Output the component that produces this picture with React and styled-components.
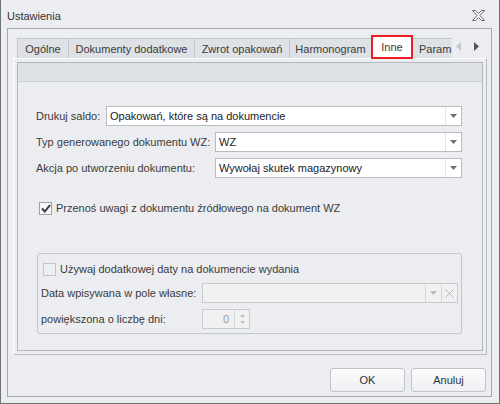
import styled, { createGlobalStyle } from 'styled-components';

const Global = createGlobalStyle`
  body { margin: 0; background: #ebedf0; }
  * { box-sizing: border-box; }
`;

const Window = styled.div`
  width: 500px;
  height: 404px;
  display: flex;
  flex-direction: column;
  background: #ebedf0;
  border: 1px solid #6f7378;
  border-top: none;
  font-family: 'Liberation Sans', Arial, sans-serif;
  font-size: 11px;
  color: #3b3b3b;
`;

const TitleBar = styled.div`
  height: 28px;
  flex: none;
  display: flex;
  align-items: center;
  justify-content: space-between;
  padding: 3px 14px 0 6px;
  font-size: 11px;
  color: #333;
`;

const Frame = styled.div`
  flex: 1;
  margin: 0 7px 6px 6px;
  border: 1px solid #a5a9ae;
  display: flex;
  flex-direction: column;
  padding: 9px 4px 4px 5px;
`;

const TabRow = styled.div`
  height: 20px;
  flex: none;
  display: flex;
  align-items: flex-end;
  position: relative;
  z-index: 2;
`;

const TabClip = styled.div`
  width: 439px;
  height: 24px;
  margin-top: -4px;
  padding-left: 4px;
  display: flex;
  align-items: flex-end;
  overflow: hidden;
  align-self: flex-end;
  margin-bottom: -1px;
  padding-bottom: 1px;
`;

const Tab = styled.div`
  flex: none;
  width: ${(p) => p.$w}px;
  height: 20px;
  margin-left: -1px;
  display: flex;
  align-items: center;
  justify-content: center;
  white-space: nowrap;
  overflow: hidden;
  background: #dee1e6;
  border: 1px solid #c3c7cc;
  border-bottom: none;
  color: #3b3b3b;

  &:first-child {
    margin-left: 0;
  }

  &.active {
    height: 24px;
    margin-bottom: -1px;
    background: #fff;
    border: 2px solid #ee1c25;
    position: relative;
    z-index: 3;
  }

  &.clipped {
    justify-content: flex-start;
    padding-left: 6px;
  }
`;

const Arrows = styled.div`
  display: flex;
  align-items: center;
  gap: 13px;
  padding: 0 0 4px 4px;
  align-self: center;
`;

const Panel = styled.div`
  height: 297px;
  flex: none;
  border: 1px solid #b9bdc2;
  border-top-color: #fff;
  border-left-color: #fff;
  padding: 3px;
  display: flex;
`;

const PanelInner = styled.div`
  flex: 1;
  border: 1px solid #b3b7bc;
  background: #ebedf0;
  display: flex;
  flex-direction: column;
`;

const Strip = styled.div`
  height: 19px;
  flex: none;
  background: #dee1e5;
  border-bottom: 1px solid #d0d3d7;
`;

const Content = styled.div`
  padding: 24px 20px 0 18px;
  display: flex;
  flex-direction: column;
`;

const Row = styled.div`
  display: flex;
  align-items: center;
  height: 20px;
  margin-top: ${(p) => p.$mt || 0}px;
`;

const Label = styled.div`
  flex: none;
  width: ${(p) => p.$w}px;
  white-space: nowrap;
`;

const Combo = styled.div`
  flex: ${(p) => (p.$w ? 'none' : '1')};
  width: ${(p) => (p.$w ? `${p.$w}px` : 'auto')};
  height: 20px;
  display: flex;
  align-items: stretch;
  background: ${(p) => (p.$disabled ? '#f1f1f2' : '#fff')};
  border: 1px solid ${(p) => (p.$disabled ? '#c6c9cd' : '#b7bbc0')};
`;

const ComboText = styled.div`
  flex: 1;
  display: flex;
  align-items: center;
  justify-content: ${(p) => (p.$right ? 'flex-end' : 'flex-start')};
  padding: 0 ${(p) => (p.$right ? '5px' : '3px')};
  color: ${(p) => (p.$disabled ? '#9a9a9a' : '#222')};
  white-space: nowrap;
`;

const ComboButton = styled.div`
  flex: none;
  width: ${(p) => p.$w || 16}px;
  display: flex;
  flex-direction: ${(p) => (p.$col ? 'column' : 'row')};
  align-items: center;
  justify-content: center;
  gap: 4px;
  border-left: 1px solid ${(p) => (p.$disabled ? '#d6d8db' : '#e2e4e7')};
`;

const Check = styled.div`
  width: 13px;
  height: 13px;
  flex: none;
  border: 1px solid ${(p) => (p.$disabled ? '#c2c5c9' : '#9ea2a6')};
  background: ${(p) => (p.$disabled ? '#eceef0' : '#f5f6f7')};
  display: flex;
  align-items: center;
  justify-content: center;
  margin: 0 4px 0 ${(p) => p.$ml || 0}px;
`;

const CheckRow = styled.div`
  display: flex;
  align-items: center;
  height: 14px;
  margin-top: ${(p) => p.$mt || 0}px;
  white-space: nowrap;
`;

const Group = styled.fieldset`
  margin: 38px 0 0 1px;
  height: 81px;
  border: 1px solid #c2c6cb;
  border-radius: 3px;
  padding: 8px 3px 4px 3px;
  display: flex;
  flex-direction: column;
  min-width: 0;
`;

const Footer = styled.div`
  margin-top: 13px;
  display: flex;
  justify-content: flex-end;
  gap: 6px;
  padding-right: 1px;
`;

const Button = styled.button`
  width: 75px;
  height: 24px;
  font-family: inherit;
  font-size: 11px;
  color: #333;
  background: linear-gradient(#fbfbfc, #eef0f2);
  border: 1px solid #c1c5ca;
  border-radius: 3px;
  padding: 0;
`;

const DownArrow = ({ color = '#707070' }) => (
  <svg width="7" height="4" viewBox="0 0 7 4">
    <path d="M0 0H7L3.5 4Z" fill={color} />
  </svg>
);

const Close = () => (
  <svg width="13" height="11" viewBox="0 0 13 11">
    <path
      d="M0.5 0.5H3.5L6.5 3.5L9.5 0.5H12.5L8 5.5L12.5 10.5H9.5L6.5 7.5L3.5 10.5H0.5L5 5.5Z"
      fill="#f4f4f4"
      stroke="#6a6a6a"
      strokeWidth="1"
    />
  </svg>
);

const CheckMark = () => (
  <svg width="10" height="9" viewBox="0 0 10 9">
    <path d="M1 4.5L3.8 7.5L9 1" fill="none" stroke="#3a3a3a" strokeWidth="2" />
  </svg>
);

const tabs = [
  { name: 'Ogólne', w: 52 },
  { name: 'Dokumenty dodatkowe', w: 127 },
  { name: 'Zwrot opakowań', w: 96 },
  { name: 'Harmonogram', w: 83 },
  { name: 'Inne', w: 42, active: true },
  { name: 'Parametry', w: 80, clipped: true },
];

export default function App() {
  return (
    <>
      <Global />
      <Window>
        <TitleBar>
          <span>Ustawienia</span>
          <Close />
        </TitleBar>
        <Frame>
          <TabRow>
            <TabClip>
              {tabs.map((t) => (
                <Tab
                  key={t.name}
                  $w={t.w}
                  className={[t.active && 'active', t.clipped && 'clipped'].filter(Boolean).join(' ')}
                >
                  {t.name}
                </Tab>
              ))}
            </TabClip>
            <Arrows>
              <svg width="5" height="9" viewBox="0 0 5 9">
                <path d="M5 0V9L0 4.5Z" fill="#c4c7cb" />
              </svg>
              <svg width="5" height="9" viewBox="0 0 5 9">
                <path d="M0 0V9L5 4.5Z" fill="#555" />
              </svg>
            </Arrows>
          </TabRow>
          <Panel>
            <PanelInner>
              <Strip />
              <Content>
                <Row>
                  <Label $w={70}>Drukuj saldo:</Label>
                  <Combo>
                    <ComboText>Opakowań, które są na dokumencie</ComboText>
                    <ComboButton>
                      <DownArrow />
                    </ComboButton>
                  </Combo>
                </Row>
                <Row $mt={6}>
                  <Label $w={179}>Typ generowanego dokumentu WZ:</Label>
                  <Combo>
                    <ComboText>WZ</ComboText>
                    <ComboButton>
                      <DownArrow />
                    </ComboButton>
                  </Combo>
                </Row>
                <Row $mt={6}>
                  <Label $w={179}>Akcja po utworzeniu dokumentu:</Label>
                  <Combo>
                    <ComboText>Wywołaj skutek magazynowy</ComboText>
                    <ComboButton>
                      <DownArrow />
                    </ComboButton>
                  </Combo>
                </Row>
                <CheckRow $mt={23}>
                  <Check $ml={3}>
                    <CheckMark />
                  </Check>
                  Przenoś uwagi z dokumentu źródłowego na dokument WZ
                </CheckRow>
                <Group>
                  <CheckRow>
                    <Check $ml={2} $disabled />
                    Używaj dodatkowej daty na dokumencie wydania
                  </CheckRow>
                  <Row $mt={7}>
                    <Label $w={161}>Data wpisywana w pole własne:</Label>
                    <Combo $disabled>
                      <ComboText $disabled />
                      <ComboButton $disabled>
                        <DownArrow color="#b5b8bc" />
                      </ComboButton>
                      <ComboButton $disabled>
                        <svg width="9" height="9" viewBox="0 0 9 9">
                          <path d="M0.5 0.5L8.5 8.5M8.5 0.5L0.5 8.5" stroke="#b3b6ba" strokeWidth="1" />
                        </svg>
                      </ComboButton>
                    </Combo>
                  </Row>
                  <Row $mt={6}>
                    <Label $w={161}>powiększona o liczbę dni:</Label>
                    <Combo $w={48} $disabled>
                      <ComboText $right $disabled>0</ComboText>
                      <ComboButton $disabled $col $w={15}>
                        <svg width="5" height="3" viewBox="0 0 5 3">
                          <path d="M0 3H5L2.5 0Z" fill="#bdc0c4" />
                        </svg>
                        <svg width="5" height="3" viewBox="0 0 5 3">
                          <path d="M0 0H5L2.5 3Z" fill="#bdc0c4" />
                        </svg>
                      </ComboButton>
                    </Combo>
                  </Row>
                </Group>
              </Content>
            </PanelInner>
          </Panel>
          <Footer>
            <Button>OK</Button>
            <Button>Anuluj</Button>
          </Footer>
        </Frame>
      </Window>
    </>
  );
}
